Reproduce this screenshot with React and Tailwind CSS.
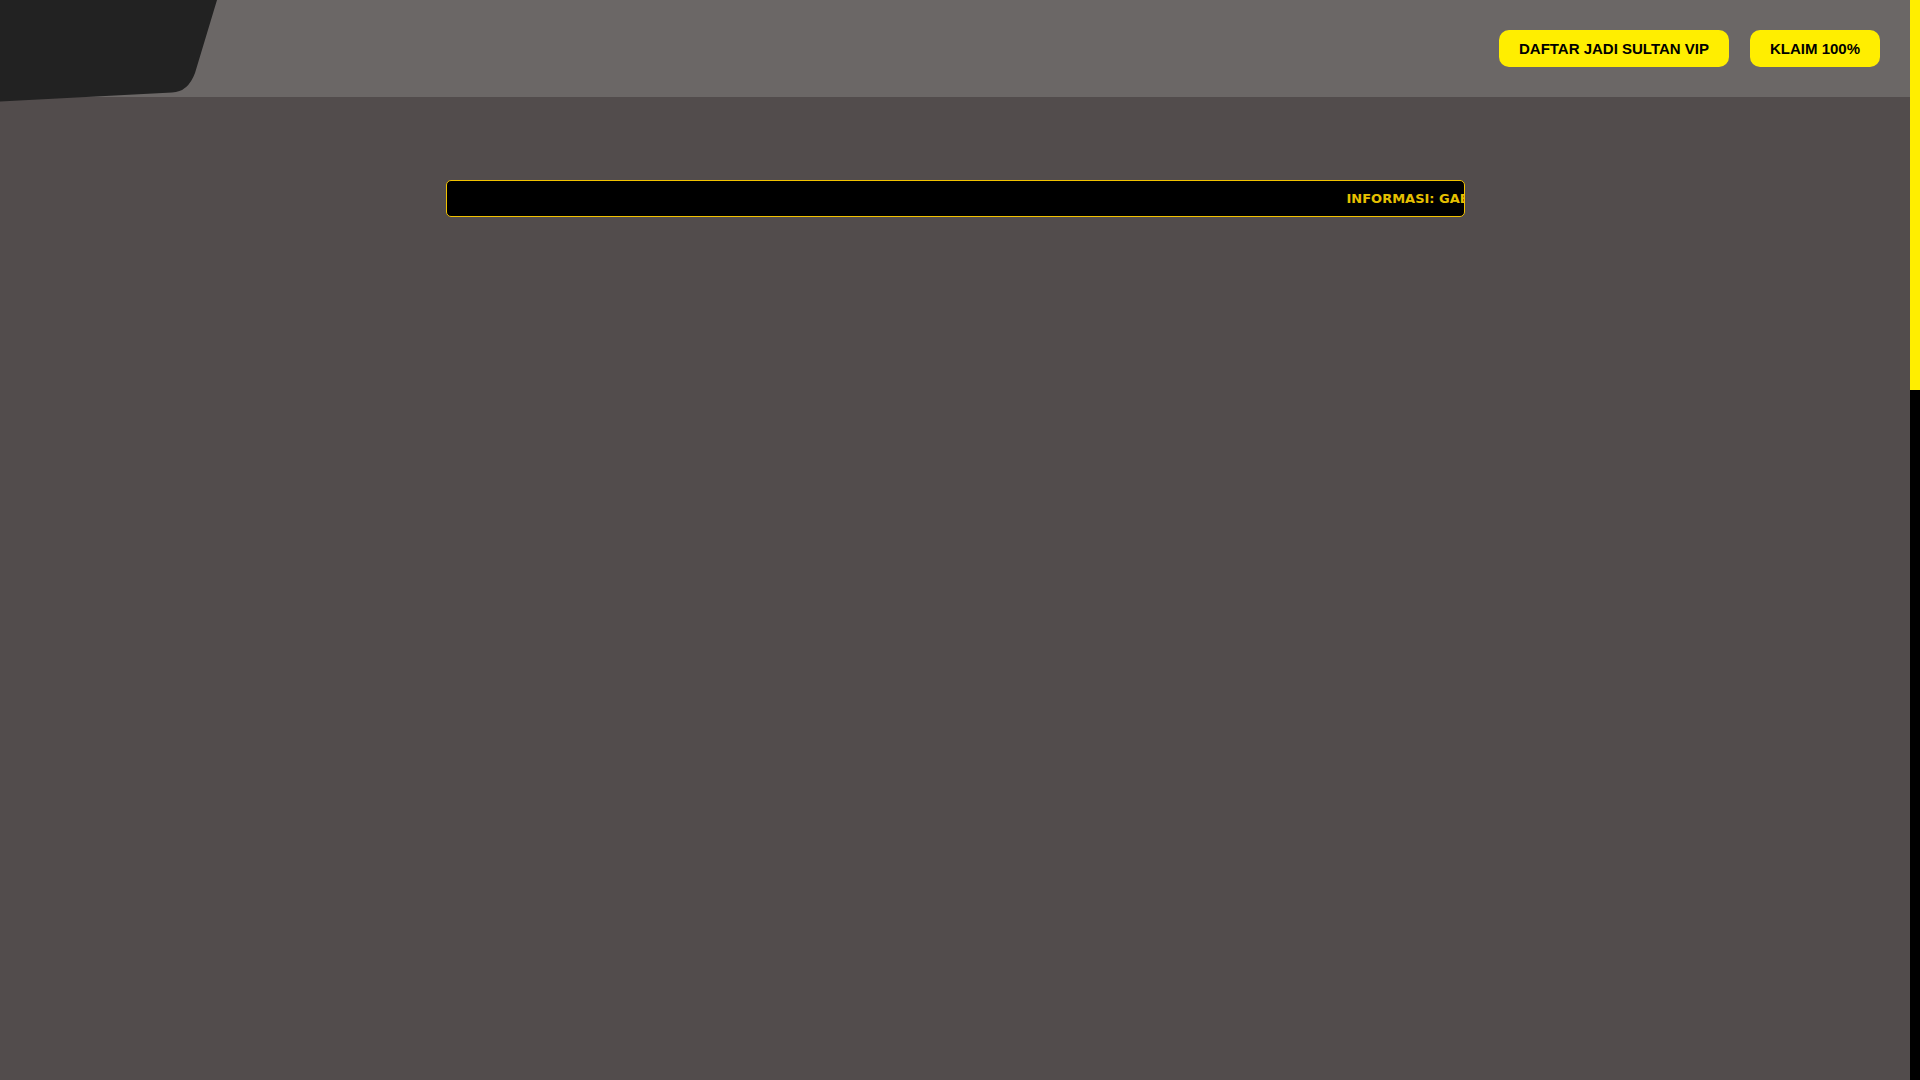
import React from 'react';

const Logo = () => (
  <svg className="absolute left-0 top-0 z-10" width="220" height="104" viewBox="0 0 220 104">
    <path d="M0 0 H217 L195 73 Q188 92 172 92.5 L0 101.5 Z" fill="#222222" />
  </svg>
);

const App = () => {
  return (
    <div
      className="flex h-screen w-full overflow-hidden bg-[#524c4c]"
      style={{ fontFamily: '"Liberation Sans", Arial, sans-serif' }}
    >
      <div className="relative min-w-0 flex-1">
        {/* Header */}
        <header className="relative flex h-[97px] items-center justify-end gap-[21px] bg-[#6b6766] pr-[30px]">
          <Logo />
          <a className="flex h-[37px] items-center rounded-[10px] bg-[#ffee00] px-5 pt-px text-[15px] font-bold text-black">
            DAFTAR JADI SULTAN VIP
          </a>
          <a className="flex h-[37px] items-center rounded-[10px] bg-[#ffee00] px-5 pt-px text-[15px] font-bold text-black">
            KLAIM 100%
          </a>
        </header>

        {/* Running info */}
        <div className="mt-[83px] flex justify-center">
          <div className="flex h-[37px] w-[1019px] items-center overflow-hidden rounded-[5px] border border-[#f2c200] bg-black">
            <div
              className="whitespace-nowrap pl-[900px] pt-px text-[13px] font-bold text-[#e6c000]"
              style={{ fontFamily: '"DejaVu Sans", sans-serif' }}
            >
              INFORMASI: GABUNG SEKARANG DAN KLAIM BONUS 100% UNTUK MEMBER BARU
            </div>
          </div>
        </div>
      </div>

      {/* Scrollbar */}
      <div className="flex w-[10px] flex-col bg-black">
        <div className="h-[390px] bg-[#ffee00]" />
      </div>
    </div>
  );
};

export default App;
